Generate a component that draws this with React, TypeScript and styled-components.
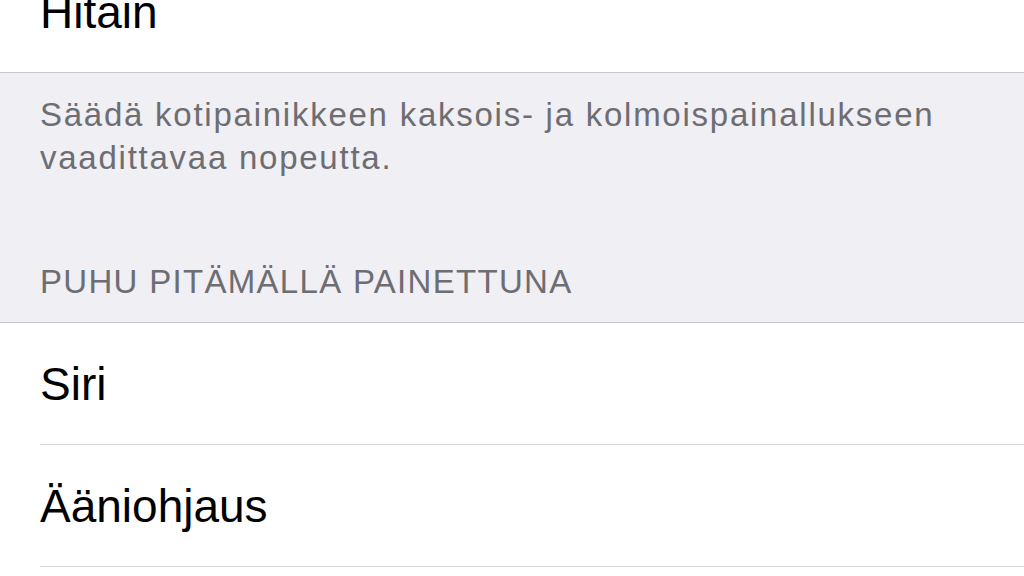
import React from "react";
import styled, { createGlobalStyle } from "styled-components";

const Global = createGlobalStyle`
  html, body { margin: 0; padding: 0; background: #efeff4; }
  body { font-family: "Liberation Sans", Arial, sans-serif; overflow: hidden; }
`;

const Page = styled.div`
  width: 1024px;
  height: 576px;
  overflow: hidden;
  background: #efeff4;
`;

const Scroller = styled.div`
  margin-top: -50px;
`;

const Group = styled.div`
  background: #ffffff;
  border-top: 1px solid #c8c7cc;
  border-bottom: 1px solid #c8c7cc;
  padding-left: 40px;
`;

const Row = styled.div<{ $last?: boolean }>`
  height: 121px;
  display: flex;
  align-items: center;
  font-size: 46px;
  color: #000;
  border-bottom: ${(p) => (p.$last ? "none" : "1px solid #d6d5da")};
`;

const Footer = styled.div`
  padding: 20px 40px 0 40px;
  font-size: 33px;
  line-height: 43px;
  letter-spacing: 1.75px;
  color: #6d6d72;
  white-space: nowrap;
`;

const Header = styled.div`
  padding: 83px 40px 20px 40px;
  font-size: 33px;
  line-height: 40px;
  letter-spacing: 1.3px;
  color: #6d6d72;
  text-transform: uppercase;
`;

export default function App() {
  return (
    <Page>
      <Global />
      <Scroller>
        <Group>
          <Row $last>Hitain</Row>
        </Group>
        <Footer>
          Säädä kotipainikkeen kaksois- ja kolmoispainallukseen
          <br />
          vaadittavaa nopeutta.
        </Footer>
        <Header>Puhu pitämällä painettuna</Header>
        <Group>
          <Row>Siri</Row>
          <Row>Ääniohjaus</Row>
          <Row $last />
        </Group>
      </Scroller>
    </Page>
  );
}
